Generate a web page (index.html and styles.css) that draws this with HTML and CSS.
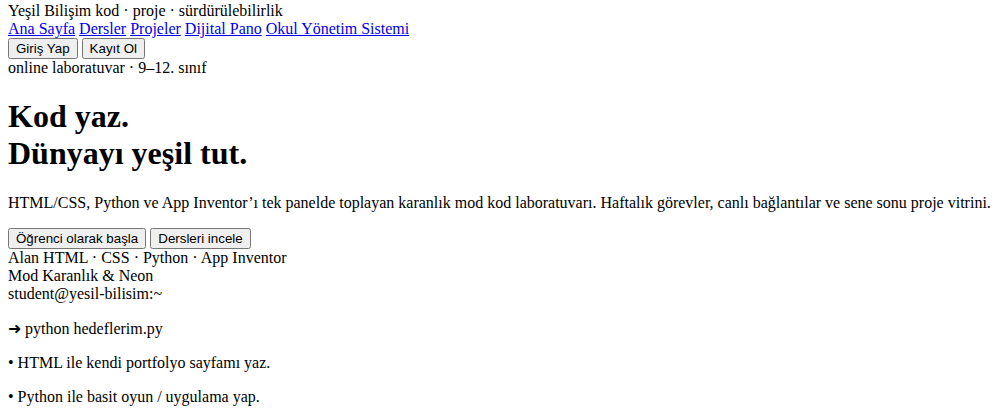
FILE: index.html
```html
<!DOCTYPE html>
<html lang="tr">
<head>
  <meta charset="UTF-8" />
  <meta name="viewport" content="width=device-width, initial-scale=1.0" />
  <title>Yeşil Bilişim</title>
  <link rel="stylesheet" href="styles.css">
</head>
<body>
  <header>
    <div class="brand">
      <span>Yeşil Bilişim</span>
      <span>kod · proje · sürdürülebilirlik</span>
    </div>
    <nav>
      <a href="#">Ana Sayfa</a>
      <a href="#">Dersler</a>
      <a href="#">Projeler</a>
      <a href="#">Dijital Pano</a>
      <a href="#">Okul Yönetim Sistemi</a>
    </nav>
    <div class="auth">
      <button>Giriş Yap</button>
      <button>Kayıt Ol</button>
    </div>
  </header>

  <main>
    <section class="hero">
      <div class="tag">online laboratuvar · 9–12. sınıf</div>
      <h1>Kod yaz.<br>Dünyayı yeşil tut.</h1>
      <p>HTML/CSS, Python ve App Inventor’ı tek panelde toplayan karanlık mod kod laboratuvarı. Haftalık görevler, canlı bağlantılar ve sene sonu proje vitrini.</p>
      <div class="actions">
        <button>Öğrenci olarak başla</button>
        <button>Dersleri incele</button>
      </div>
      <div class="meta">
        <div><span>Alan</span> <span>HTML · CSS · Python · App Inventor</span></div>
        <div><span>Mod</span> <span>Karanlık &amp; Neon</span></div>
      </div>
    </section>

    <section class="terminal">
      <div class="term-title">student@yesil-bilisim:~</div>
      <p>➜ python hedeflerim.py</p>
      <p>• HTML ile kendi portfolyo sayfamı yaz.</p>
      <p>• Python ile basit oyun / uygulama yap.</p>
    </section>
  </main>
</body>
</html>
```

FILE: styles.css
```css
body {
  font-family: "Liberation Serif", "Times New Roman", serif;
  font-size: 16px;
  margin: 2px 8px 8px;
}
button {
  font-family: "Liberation Sans", Arial, sans-serif;
  font-size: 13.333px;
}
```
